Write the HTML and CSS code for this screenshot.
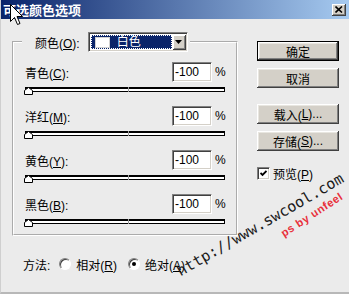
FILE: index.html
```html
<!DOCTYPE html>
<html lang="zh-CN">
<head>
<meta charset="utf-8">
<title>可选颜色选项</title>
<link rel="stylesheet" href="styles.css">
</head>
<body>
<div class="window">
  <div class="titlebar">
    <span class="title">可选颜色选项</span>
    <span class="close"><svg width="8" height="7" viewBox="0 0 8 7"><path d="M0.5 0.5 L7 6.5 M7 0.5 L0.5 6.5" stroke="#000" stroke-width="1.6"/></svg></span>
  </div>
  <div class="content">
    <div class="main">
      <fieldset class="group">
        <legend class="legend">
          <span class="lbl">颜色(<u>O</u>):</span>
          <span class="select">
            <span class="sel-value"><span class="swatch"></span><span class="sel-text">白色</span></span>
            <span class="sel-btn"><svg width="7" height="4" viewBox="0 0 7 4"><path d="M0 0 H7 L3.5 4 Z" fill="#000"/></svg></span>
          </span>
        </legend>
        <div class="row">
          <div class="row-top"><span class="lbl">青色(<u>C</u>):</span><span class="num">-100</span><span class="pct">%</span></div>
          <div class="slider"><span class="track"><span class="tick"></span></span><svg class="thumb" width="9" height="8" viewBox="0 0 9 8"><path d="M0.5 7.5 V3.5 L4.5 0.5 L8.5 3.5 V7.5 Z" fill="#fff" stroke="#000"/></svg></div>
        </div>
        <div class="row">
          <div class="row-top"><span class="lbl">洋红(<u>M</u>):</span><span class="num">-100</span><span class="pct">%</span></div>
          <div class="slider"><span class="track"><span class="tick"></span></span><svg class="thumb" width="9" height="8" viewBox="0 0 9 8"><path d="M0.5 7.5 V3.5 L4.5 0.5 L8.5 3.5 V7.5 Z" fill="#fff" stroke="#000"/></svg></div>
        </div>
        <div class="row">
          <div class="row-top"><span class="lbl">黄色(<u>Y</u>):</span><span class="num">-100</span><span class="pct">%</span></div>
          <div class="slider"><span class="track"><span class="tick"></span></span><svg class="thumb" width="9" height="8" viewBox="0 0 9 8"><path d="M0.5 7.5 V3.5 L4.5 0.5 L8.5 3.5 V7.5 Z" fill="#fff" stroke="#000"/></svg></div>
        </div>
        <div class="row">
          <div class="row-top"><span class="lbl">黑色(<u>B</u>):</span><span class="num">-100</span><span class="pct">%</span></div>
          <div class="slider"><span class="track"><span class="tick"></span></span><svg class="thumb" width="9" height="8" viewBox="0 0 9 8"><path d="M0.5 7.5 V3.5 L4.5 0.5 L8.5 3.5 V7.5 Z" fill="#fff" stroke="#000"/></svg></div>
        </div>
      </fieldset>
      <div class="side">
        <span class="btn btn-default">确定</span>
        <span class="btn btn-cancel">取消</span>
        <span class="btn btn-load">载入(<u>L</u>)...</span>
        <span class="btn btn-save">存储(<u>S</u>)...</span>
        <label class="check"><span class="cbox"><svg width="7" height="7" viewBox="0 0 7 7"><path d="M0.5 3 L2.5 5 L6.5 1" fill="none" stroke="#000" stroke-width="1.8"/></svg></span><span>预览(<u>P</u>)</span></label>
      </div>
    </div>
    <div class="method">
      <span class="lbl">方法:</span>
      <span class="radio"></span><span class="rlabel">相对(<u>R</u>)</span>
      <span class="radio checked"></span><span class="rlabel">绝对(<u>A</u>)</span>
    </div>
  </div>
  <div class="wm-url">http://www.swcool.com</div>
  <div class="wm-by">ps by unfeel</div>
  <svg class="cursor" width="13" height="22" viewBox="0 0 13 22"><path d="M0.5 0.5 V17.5 L4.5 13.5 L7.5 20.5 L10 19.5 L7 12.5 H12.5 Z" fill="#fff" stroke="#000"/></svg>
</div>
</body>
</html>
```
FILE: styles.css
```css
* { box-sizing: border-box; }
body {
  margin: 0;
  background: #ebebeb;
  font-family: "Liberation Sans", "Noto Sans CJK SC", sans-serif;
  font-size: 12px;
  color: #000;
}
u { text-decoration: underline; text-underline-offset: 1px; }
.window {
  position: relative;
  width: 349px;
  height: 294px;
  overflow: hidden;
  background: #ebebeb;
  border-left: 1px solid #cfcfcf;
  border-bottom: 2px solid #b8b8b8;
}
.titlebar {
  height: 19px;
  background: linear-gradient(to right, #0a246a 0%, #a6caf0 100%);
  display: flex;
  align-items: center;
  justify-content: space-between;
  padding: 0 3px 0 2px;
}
.title {
  color: #fff;
  font-weight: bold;
  font-size: 13px;
  font-family: "Noto Sans CJK SC", sans-serif;
  line-height: 19px;
}
.close {
  width: 14px;
  height: 12px;
  background: #d4d0c8;
  box-shadow: inset -1px -1px #404040, inset 1px 1px #fff, inset -2px -2px #808080;
  display: flex;
  align-items: center;
  justify-content: center;
  padding: 0 1px 1px 0;
}
.content { padding: 13px 0 0 11px; }
.main { display: flex; align-items: flex-start; }
.group {
  width: 226px;
  margin: 0;
  padding: 10px 0 7px 11px;
  border: 2px groove #fff;
}
.legend {
  padding: 0 2px 0 13px;
  margin-left: -3px;
  height: 20px;
  display: flex;
  align-items: center;
}
.legend .lbl { margin-right: 8px; }
.select {
  width: 100px;
  height: 20px;
  display: flex;
  align-items: center;
  padding: 1px;
  background: #fff;
  border: 1px solid;
  border-color: #808080 #fff #fff #808080;
  box-shadow: inset 1px 1px #404040, inset -1px -1px #d4d0c8;
}
.sel-value {
  flex: 1;
  height: 14px;
  margin: 0 1px 0 1px;
  background: #0a246a;
  border: 1px dotted #fff;
  display: flex;
  align-items: center;
  padding-left: 3px;
  color: #fff;
}
.swatch {
  width: 15px;
  height: 11px;
  background: #fff;
  border: 1px solid #d0d0d0;
  margin-right: 7px;
}
.sel-text { line-height: 12px; }
.sel-btn {
  width: 13px;
  height: 15px;
  background: #d4d0c8;
  box-shadow: inset -1px -1px #404040, inset 1px 1px #fff, inset -2px -2px #808080;
  display: flex;
  align-items: center;
  justify-content: center;
  padding: 0 1px 1px 0;
}
.row { width: 200px; margin-bottom: 11px; }
.row:last-child { margin-bottom: 0; }
.row-top {
  display: grid;
  grid-template-columns: 1fr 40px 13px;
  align-items: center;
  height: 20px;
}
.num {
  height: 20px;
  background: #fff;
  border: 1px solid;
  border-color: #808080 #fff #fff #808080;
  box-shadow: inset 1px 1px #404040, inset -1px -1px #d4d0c8;
  padding-left: 2px;
  display: flex;
  align-items: center;
  font-size: 12px;
}
.pct { padding-left: 3px; }
.slider {
  position: relative;
  height: 8px;
  width: 201px;
  margin-top: 5px;
  margin-left: -1px;
}
.track {
  display: block;
  position: relative;
  margin: 2px 0 0 1px;
  width: 200px;
  height: 5px;
  background: #fff;
  border: 1px solid #000;
  border-top: 2px solid #000;
}
.tick {
  position: absolute;
  left: 102px;
  top: -2px;
  width: 1px;
  height: 5px;
  background: #9a9a9a;
}
.thumb { position: absolute; left: 0; top: 0; }
.side {
  width: 82px;
  margin-left: 19px;
  padding-top: 9px;
  display: flex;
  flex-direction: column;
}
.btn {
  height: 20px;
  background: #d4d0c8;
  box-shadow: inset -1px -1px #404040, inset 1px 1px #fff, inset -2px -2px #808080, inset 2px 2px #e8e6e0;
  display: flex;
  align-items: center;
  justify-content: center;
}
.btn-default {
  border: 1px solid #000;
}
.btn-cancel { margin-top: 7px; }
.btn-load { margin-top: 16px; }
.btn-save { margin-top: 7px; }
.check {
  margin-top: 16px;
  display: flex;
  align-items: center;
  height: 13px;
}
.cbox {
  width: 13px;
  height: 13px;
  margin-right: 3px;
  background: #fff;
  border: 1px solid;
  border-color: #808080 #fff #fff #808080;
  box-shadow: inset 1px 1px #404040, inset -1px -1px #d4d0c8;
  display: flex;
  align-items: center;
  justify-content: center;
}
.method {
  display: flex;
  align-items: center;
  height: 20px;
  margin-top: 18px;
  padding-left: 11px;
}
.radio {
  width: 12px;
  height: 12px;
  border-radius: 50%;
  background: #fff;
  border: 1px solid;
  border-color: #808080 #fff #fff #808080;
  box-shadow: inset 1px 1px #404040;
  margin: 0 5px 0 9px;
  display: flex;
  align-items: center;
  justify-content: center;
}
.radio + .rlabel + .radio { margin-left: 11px; }
.radio.checked::after {
  content: "";
  width: 4px;
  height: 4px;
  border-radius: 50%;
  background: #000;
}
.wm-url {
  position: absolute;
  left: 181px;
  top: 263px;
  transform: rotate(-30deg);
  transform-origin: 0 100%;
  font-family: "DejaVu Sans Mono", monospace;
  font-size: 15px;
  line-height: 16px;
  color: #1a1a1a;
  white-space: nowrap;
}
.wm-by {
  position: absolute;
  left: 284px;
  top: 227px;
  transform: rotate(-33deg);
  transform-origin: 0 100%;
  font-family: "Liberation Sans", sans-serif;
  font-weight: bold;
  font-size: 11px;
  line-height: 12px;
  letter-spacing: 0.6px;
  color: #e8303a;
  white-space: nowrap;
}
.cursor { position: absolute; left: 9px; top: 4px; }
```
